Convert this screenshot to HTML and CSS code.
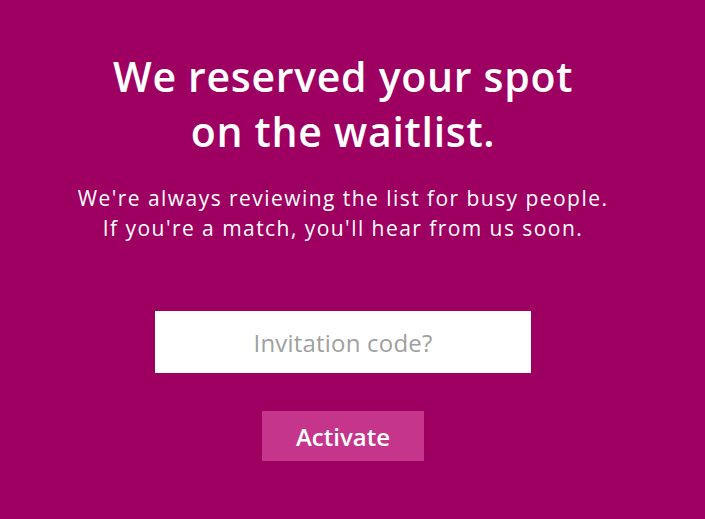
FILE: index.html
```html
<!DOCTYPE html>
<html lang="en">

<head>
    <meta charset="UTF-8">
    <title>Waitlist</title>
    <link rel="stylesheet" href="styles.css">
</head>

<body>
    <div class="page">
        <h1 class="title">We reserved your spot<br>on the waitlist.</h1>
        <p class="subtitle">We're always reviewing the list for busy people.<br>If you're a match, you'll hear from us soon.</p>
        <form class="invite-form">
            <input type="text" class="invite-input" placeholder="Invitation code?">
            <button type="button" class="activate-btn">Activate</button>
        </form>
    </div>
</body>

</html>
```

FILE: styles.css
```css
html,
body {
    margin: 0;
    padding: 0;
    height: 100%;
}

body {
    background-color: #9e0062;
    font-family: "Open Sans", "Noto Sans", sans-serif;
    color: #fff;
}

/* 가운데 정렬된 컬럼 */
.page {
    width: 686px;
    display: flex;
    flex-direction: column;
    align-items: center;
    padding-top: 49px;
}

.title {
    margin: 0;
    font-size: 41px;
    font-weight: 600;
    line-height: 55px;
    letter-spacing: 0.7px;
    text-align: center;
}

.subtitle {
    margin: 24px 0 0 0;
    font-size: 21px;
    line-height: 30px;
    text-align: center;
    letter-spacing: 1.45px;
}

.invite-form {
    display: flex;
    flex-direction: column;
    align-items: center;
    margin-top: 68px;
    gap: 38px;
}

.invite-input {
    width: 376px;
    height: 62px;
    box-sizing: border-box;
    border: none;
    outline: none;
    border-radius: 0;
    background-color: #fff;
    text-align: center;
    font-family: inherit;
    font-size: 24px;
    letter-spacing: 0.2px;
    color: #333;

    &::placeholder {
        color: #a0a0a0;
    }
}

.activate-btn {
    width: 162px;
    height: 50px;
    border: none;
    border-radius: 0;
    background-color: #c4358b;
    color: #fff;
    font-family: inherit;
    font-size: 24px;
    font-weight: 600;
    cursor: pointer;
}
```
